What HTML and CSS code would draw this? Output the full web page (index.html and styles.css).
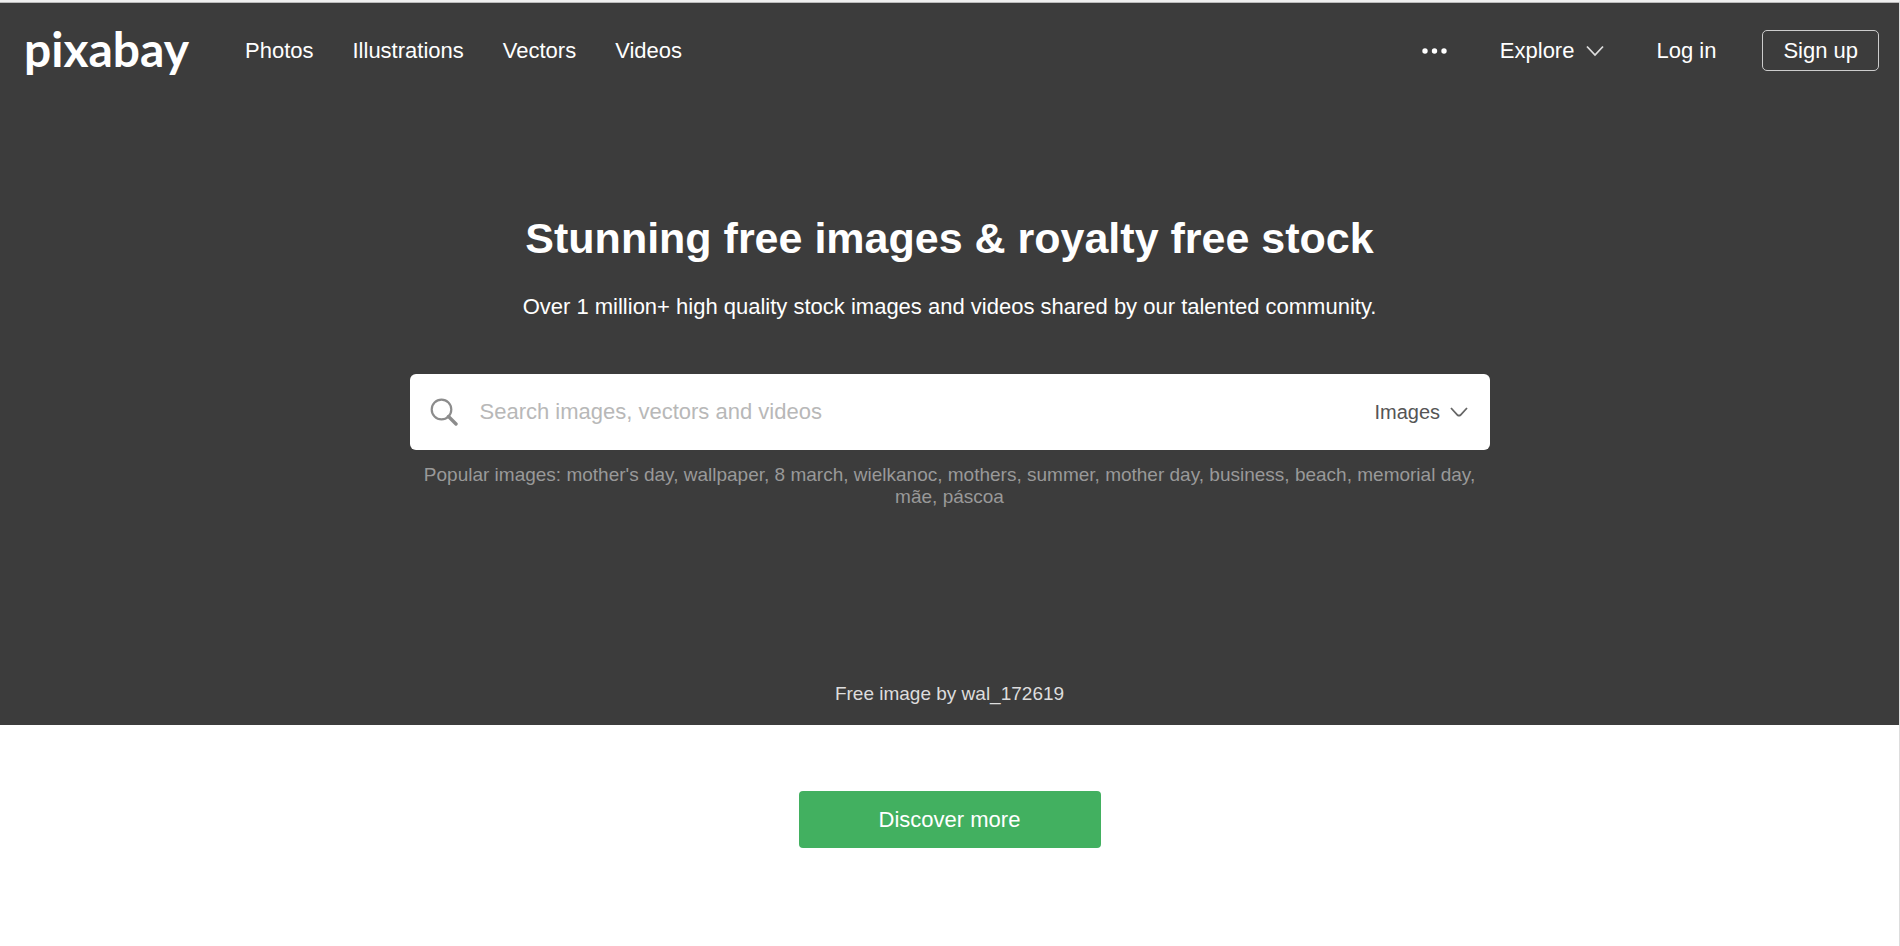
FILE: index.html
```html
<!DOCTYPE html>
<html lang="en">
<head>
    <meta charset="UTF-8">
    <meta name="viewport" content="width=device-width, initial-scale=1.0">
    <title>Stunning free images - Pixabay</title>
    <link rel="stylesheet" href="styles.css">
</head>
<body>
    <div class="hero">
        <header class="header">
            <a class="logo" href="#">pixabay</a>
            <nav class="menu">
                <a href="#">Photos</a>
                <a href="#">Illustrations</a>
                <a href="#">Vectors</a>
                <a href="#">Videos</a>
            </nav>
            <div class="account">
                <button class="more" type="button" aria-label="More">
                    <svg width="26" height="6" viewBox="0 0 26 6" fill="#fff">
                        <circle cx="3" cy="3" r="2.7"/>
                        <circle cx="12.5" cy="3" r="2.7"/>
                        <circle cx="22" cy="3" r="2.7"/>
                    </svg>
                </button>
                <button class="explore" type="button">
                    Explore
                    <svg width="18" height="12" viewBox="0 0 18 12" fill="none" stroke="#ddd" stroke-width="1.8">
                        <path d="M1 1.5 9 10 17 1.5"/>
                    </svg>
                </button>
                <a class="login" href="#">Log in</a>
                <a class="signup" href="#">Sign up</a>
            </div>
        </header>

        <main class="intro">
            <h1>Stunning free images &amp; royalty free stock</h1>
            <p class="tagline">Over 1 million+ high quality stock images and videos shared by our talented community.</p>
            <form class="search">
                <svg class="search-icon" width="28" height="28" viewBox="0 0 28 28" fill="none" stroke="#8c8c8c">
                    <circle cx="11.5" cy="11.5" r="9.8" stroke-width="2.2"/>
                    <path d="M18.500 18.500 26 26" stroke-width="3.400" stroke-linecap="round"/>
                </svg>
                <input type="text" placeholder="Search images, vectors and videos" aria-label="Search">
                <select aria-label="Media type">
                    <option>Images</option>
                    <option>Photos</option>
                    <option>Vectors</option>
                    <option>Videos</option>
                </select>
                <svg class="arrow" width="18" height="12" viewBox="0 0 18 12" fill="none" stroke="#666" stroke-width="1.8">
                    <path d="M1 2 7.500 9Q9 10.300 10.500 9L17 2"/>
                </svg>
            </form>
            <p class="popular">Popular images: <a href="#">mother's day</a>, <a href="#">wallpaper</a>, <a href="#">8 march</a>, <a href="#">wielkanoc</a>, <a href="#">mothers</a>, <a href="#">summer</a>, <a href="#">mother day</a>, <a href="#">business</a>, <a href="#">beach</a>, <a href="#">memorial day</a>, <a href="#">mãe</a>, <a href="#">páscoa</a></p>
        </main>

        <p class="credit"><a href="#">Free image by wal_172619</a></p>
    </div>

    <div class="discover">
        <button class="discover-btn" type="button">Discover more</button>
    </div>
</body>
</html>
```
FILE: styles.css
```css
* {
    box-sizing: border-box;
}
body {
    margin: 0;
    min-height: 100vh;
    border-top: 2px solid #f0f0f0;
    border-right: 1px solid #ddd;
    background: #fff;
    font-family: "Liberation Sans", Arial, sans-serif;
    font-size: 22px;
}
a {
    color: inherit;
    text-decoration: none;
}
button {
    font: inherit;
    color: inherit;
    background: none;
    border: none;
    padding: 0;
    cursor: pointer;
}
h1, p {
    margin: 0;
}
.hero {
    border-top: 1px solid #bbb;
    background: #3c3c3c;
    color: #fff;
    text-align: center;
    padding-bottom: 20px;
}
.header {
    display: flex;
    align-items: center;
    height: 95px;
    padding: 0 20px 0 24px;
}
.logo {
    width: 221px;
    padding-bottom: 4px;
    font-family: Lato, sans-serif;
    font-size: 48px;
    font-weight: bold;
    line-height: 60px;
    text-align: left;
}
.menu {
    display: flex;
    gap: 39px;
}
.account {
    display: flex;
    align-items: center;
    gap: 52px;
    margin-left: auto;
}
.more {
    display: flex;
}
.explore {
    display: flex;
    align-items: center;
    gap: 12px;
}
.signup {
    margin-left: -6px;
    padding: 0 20px;
    border: 1px solid #ccc;
    border-radius: 5px;
    line-height: 39px;
}
.intro {
    max-width: 1080px;
    margin: 0 auto;
    padding-top: 114px;
}
h1 {
    font-size: 43px;
    line-height: 52px;
}
.tagline {
    margin-top: 29px;
    line-height: 28px;
}
.search {
    display: flex;
    align-items: center;
    height: 76px;
    margin-top: 53px;
    padding: 0 22px 0 20px;
    background: #fff;
    border-radius: 6px;
}
.search input {
    flex: 1;
    height: 100%;
    margin: 0 20px 0 22px;
    padding: 0;
    border: none;
    outline: none;
    font: inherit;
    color: #555;
}
.search input::placeholder {
    color: #b8b8b8;
}
.search select {
    appearance: none;
    border: none;
    background: none;
    padding: 0 28px 0 0;
    margin-right: -20px;
    font: inherit;
    font-size: 20px;
    color: #555;
}
.arrow {
    pointer-events: none;
}
.popular {
    margin-top: 14px;
    font-size: 19px;
    line-height: 22px;
    color: #999;
}
.credit {
    margin-top: 175px;
    font-size: 19px;
    line-height: 22px;
    color: #ddd;
}
.discover {
    padding: 66px 20px;
    text-align: center;
}
.discover-btn {
    width: 302px;
    height: 57px;
    background: #42b060;
    color: #fff;
    border-radius: 4px;
}
```
